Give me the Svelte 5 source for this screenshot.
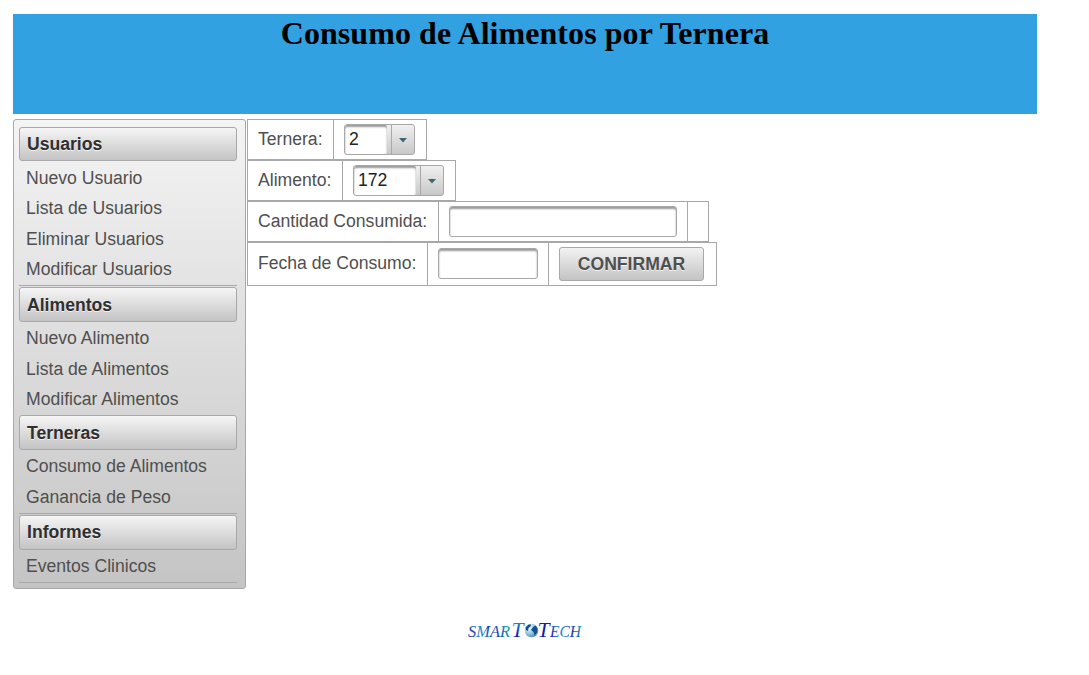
<script>
  const groups = [
    { title: 'Usuarios', items: ['Nuevo Usuario', 'Lista de Usuarios', 'Eliminar Usuarios', 'Modificar Usuarios'], rule: true },
    { title: 'Alimentos', items: ['Nuevo Alimento', 'Lista de Alimentos', 'Modificar Alimentos'], rule: false },
    { title: 'Terneras', items: ['Consumo de Alimentos', 'Ganancia de Peso'], rule: true },
    { title: 'Informes', items: ['Eventos Clinicos'], rule: true }
  ];
</script>

{#snippet select(value, kind)}
  <div class="select {kind}">
    <span class="value">{value}</span>
    <span class="trigger"><svg width="8" height="5" viewBox="0 0 8 5"><path d="M0 0h8L4 4.5z" fill="#3f6672" /></svg></span>
  </div>
{/snippet}

<div class="page">
  <header><h1>Consumo de Alimentos por Ternera</h1></header>
  <div class="body">
    <nav>
      {#each groups as g}
        <h3>{g.title}</h3>
        <ul class:ruled={g.rule}>
          {#each g.items as item}<li>{item}</li>{/each}
        </ul>
      {/each}
    </nav>
    <main>
      <div class="row">
        <div class="cell c86">Ternera:</div>
        <div class="cell choice">{@render select('2', 'narrow')}</div>
      </div>
      <div class="row">
        <div class="cell c95">Alimento:</div>
        <div class="cell choice">{@render select('172', 'wide')}</div>
      </div>
      <div class="row">
        <div class="cell c191">Cantidad Consumida:</div>
        <div class="cell"><div class="input long"></div></div>
        <div class="cell empty"></div>
      </div>
      <div class="row last">
        <div class="cell c180">Fecha de Consumo:</div>
        <div class="cell date"><div class="input short"></div></div>
        <div class="cell action"><button>CONFIRMAR</button></div>
      </div>
    </main>
  </div>
  <footer>
    <svg width="120" height="24" viewBox="0 0 120 24">
      <defs>
        <linearGradient id="ink" gradientUnits="userSpaceOnUse" x1="52" y1="4" x2="54" y2="19">
          <stop offset="0" stop-color="#12a0a8" /><stop offset=".4" stop-color="#1560c8" />
          <stop offset=".75" stop-color="#1430b8" /><stop offset="1" stop-color="#12128c" />
        </linearGradient>
        <linearGradient id="ink-start" gradientUnits="userSpaceOnUse" x1="3" y1="19" x2="45" y2="5">
          <stop offset="0" stop-color="#1420a0" /><stop offset=".35" stop-color="#1590c8" />
          <stop offset=".55" stop-color="#1430b0" /><stop offset="1" stop-color="#12b0a8" />
        </linearGradient>
        <linearGradient id="ink-end" gradientUnits="userSpaceOnUse" x1="72" y1="19" x2="116" y2="5">
          <stop offset="0" stop-color="#10108c" /><stop offset=".3" stop-color="#1426b8" />
          <stop offset=".55" stop-color="#1590c8" /><stop offset=".75" stop-color="#1430b0" /><stop offset="1" stop-color="#12b0a8" />
        </linearGradient>
        <radialGradient id="sea" cx=".35" cy=".3" r=".8">
          <stop offset="0" stop-color="#f0f8fc" /><stop offset=".5" stop-color="#9ccce8" /><stop offset="1" stop-color="#3b7bb4" />
        </radialGradient>
      </defs>
      <g font-family="Liberation Serif, serif" font-style="italic">
        <text x="3" y="19" font-size="17.5" fill="url(#ink-start)" textLength="42" lengthAdjust="spacingAndGlyphs">SMAR</text>
        <text x="46.500" y="19" font-size="22" fill="url(#ink)" textLength="12" lengthAdjust="spacingAndGlyphs">T</text>
        <text x="72.500" y="19" font-size="22" fill="#1420a8" textLength="12" lengthAdjust="spacingAndGlyphs">T</text>
        <text x="85" y="19" font-size="17.5" fill="url(#ink-end)" textLength="31" lengthAdjust="spacingAndGlyphs">ECH</text>
      </g>
      <circle cx="66.5" cy="12.5" r="6.8" fill="url(#sea)" />
      <path d="M60.500 9.500l3-3 2.500 0-.5 2-2 1.500-.5 3-2-1zM68 9l2.500-1.500 2 3-.5 4-2.500 3-1-3.500-2.500-2z" fill="#12508f" />
    </svg>
  </footer>
</div>

<style>
  :global(body) { margin: 0; background: #fff; }
  .page { box-sizing: border-box; width: 1089px; height: 675px; padding: 14px 52px 0 13px; font-family: "Liberation Sans", Arial, sans-serif; font-size: 17.6px; color: #4f4f4f; }
  header { height: 100px; background: #32a1e1; text-align: center; }
  h1 { margin: 0; padding-top: 1px; font: bold 32px/37px "Liberation Serif", "Times New Roman", serif; letter-spacing: .06px; color: #000; }
  .body { display: flex; align-items: flex-start; gap: 1px; margin-top: 5px; }
  nav { box-sizing: border-box; width: 233px; height: 470px; padding: 7px 8px 0 5px; border: 1px solid #a8a8a8; border-radius: 3px; background: linear-gradient(#f4f4f4, #c4c4c4); }
  h3 { box-sizing: border-box; height: 35px; margin: 0; padding-left: 7px; border: 1px solid #a8a8a8; border-radius: 3px; background: linear-gradient(#f5f5f5, #c4c4c4); font-size: 17.6px; line-height: 34px; color: #2f2f2f; text-shadow: 0 1px 0 rgba(255,255,255,.7); }
  h3:first-child { height: 34px; line-height: 32px; }
  h3:last-of-type { line-height: 32px; }
  ul { list-style: none; margin: 0; padding: 1.5px 0 0 7px; }
  ul.ruled { border-bottom: 1px solid #a8a8a8; margin-bottom: 1px; }
  h3:nth-of-type(3) + ul { padding-bottom: 1px; }
  ul:last-child { padding-top: .5px; padding-bottom: 1px; }
  li { height: 30.500px; line-height: 31px; }
  main { display: flex; flex-direction: column; align-items: flex-start; }
  .row { box-sizing: border-box; display: flex; height: 41px; border: 1px solid #a8a8a8; }
  .row.last { height: 44px; }
  .row.last .cell:first-child, .row.last .date { padding-bottom: 2px; }
  .cell { box-sizing: border-box; display: flex; align-items: center; padding: 0 10px; white-space: nowrap; }
  .cell + .cell { border-left: 1px solid #a8a8a8; }
  .choice { padding-right: 11px; }
  .c86 { width: 85px; } .c95 { width: 94px; } .c191 { width: 190px; } .c180 { width: 179px; }
  .empty { width: 21px; }
  .select { box-sizing: border-box; display: flex; height: 31px; border: 1px solid #a8a8a8; border-radius: 3px; background: linear-gradient(#f0f0f0, #c8c8c8); overflow: hidden; }
  .narrow { width: 71px; } .wide { width: 91px; }
  .value { flex: 1; margin-right: 4px; padding-left: 4px; border-radius: 2px; background: #fff; box-shadow: inset 0 2px 2px #999; color: #222; line-height: 29px; }
  .trigger { box-sizing: border-box; width: 23px; display: flex; align-items: center; justify-content: center; padding-top: 2px; border-left: 1px solid #a8a8a8; }
  .input { box-sizing: border-box; height: 31px; border: 1px solid #a8a8a8; border-radius: 3px; box-shadow: inset 0 2px 2px #999; }
  .long { width: 228px; } .short { width: 100px; }
  .action { padding-right: 12px; }
  button { box-sizing: border-box; width: 145px; height: 34px; padding: 0; border: 1px solid #a8a8a8; border-radius: 3px; background: linear-gradient(#f2f2f2, #c4c4c4); font: bold 17.6px "Liberation Sans", Arial, sans-serif; color: #4f4f4f; text-shadow: 0 1px 0 rgba(255,255,255,.7); }
  footer { display: flex; justify-content: center; margin-top: 29px; }
</style>
